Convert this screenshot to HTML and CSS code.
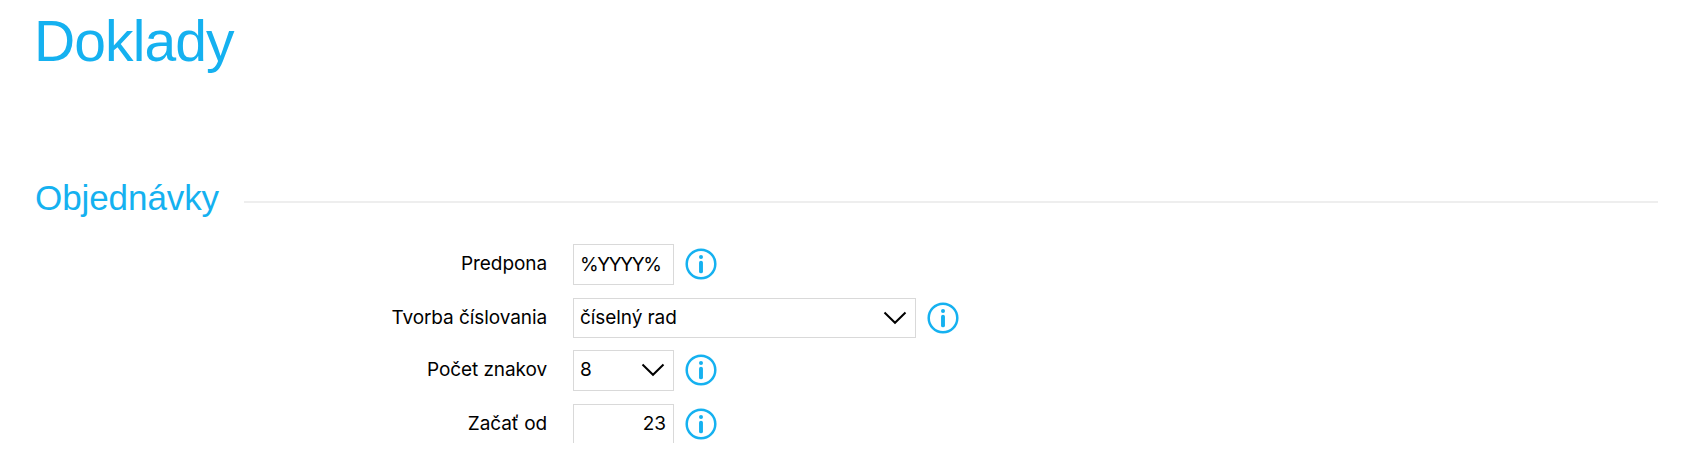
FILE: index.html
```html
<!DOCTYPE html>
<html lang="sk">
<head>
    <meta charset="UTF-8">
    <meta name="viewport" content="width=device-width, initial-scale=1.0">
    <title>Doklady</title>
    <link rel="stylesheet" href="styles.css">
</head>
<body>
    <svg class="defs" width="0" height="0">
        <symbol id="info" viewBox="0 0 32 32">
            <circle cx="16" cy="16" r="14.3" fill="none" stroke="#15b1f0" stroke-width="2.5"/>
            <circle cx="16" cy="9" r="2" fill="#15b1f0"/>
            <path d="M16 14.6v8.8" stroke="#15b1f0" stroke-width="3.9" stroke-linecap="round"/>
        </symbol>
        <symbol id="arrow" viewBox="0 0 24 14">
            <path d="M1.5 1.5L12 11.8L22.5 1.5" fill="none" stroke="#000" stroke-width="2"/>
        </symbol>
    </svg>
    <h1>Doklady</h1>
    <h2><span>Objednávky</span></h2>
    <form>
        <div class="row">
            <label for="prefix">Predpona</label>
            <div class="field short">
                <input id="prefix" class="prefix" type="text" value="%YYYY%">
            </div>
            <svg class="info"><use href="#info"/></svg>
        </div>
        <div class="row low">
            <label for="type">Tvorba číslovania</label>
            <div class="field long">
                <select id="type"><option>číselný rad</option></select>
                <svg class="arrow"><use href="#arrow"/></svg>
            </div>
            <svg class="info"><use href="#info"/></svg>
        </div>
        <div class="row">
            <label for="chars">Počet znakov</label>
            <div class="field short">
                <select id="chars"><option>8</option></select>
                <svg class="arrow"><use href="#arrow"/></svg>
            </div>
            <svg class="info"><use href="#info"/></svg>
        </div>
        <div class="row">
            <label for="start">Začať od</label>
            <div class="field short">
                <input id="start" class="number" type="text" value="23">
            </div>
            <svg class="info"><use href="#info"/></svg>
        </div>
    </form>
</body>
</html>
```
FILE: styles.css
```css
*{
    box-sizing: border-box;
}
body{
    margin: 0;
    padding: 9px 31px 0 35px;
    height: 443px;
    background: #fff;
    color: #000;
    font-family: Inter, sans-serif;
    font-size: 19px;
    letter-spacing: -0.08px;
    overflow: hidden;
}
.defs{
    position: absolute;
}
h1,
h2{
    margin: 0;
    color: #15b1f0;
    font-family: "Liberation Sans", sans-serif;
    font-weight: normal;
}
h1{
    height: 169px;
    margin-left: -1px;
    font-size: 57px;
    line-height: 65px;
    letter-spacing: -0.9px;
}
h2{
    display: flex;
    height: 66px;
    font-size: 35px;
    line-height: 40px;
}
/* line after the section title */
h2::after{
    content: "";
    flex: 1;
    height: 2px;
    margin: 23px 0 0 25px;
    background: #eee;
}
.row{
    display: flex;
    align-items: center;
    height: 41px;
    margin-bottom: 13px;
}
.row.low{
    height: 40px;
    margin-bottom: 12px;
}
label{
    width: 512px;
    margin-right: 26px;
    margin-top: -2px;
    text-align: right;
}
.field{
    position: relative;
    height: 100%;
    border: 1px solid #d9d9d9;
    margin-right: 11px;
}
.short{
    width: 101px;
}
.long{
    width: 343px;
}
.field input,
.field select{
    display: block;
    width: 100%;
    height: 100%;
    margin: 0;
    padding: 0 7px 2px 6px;
    border: 0;
    outline: 0;
    background: none;
    color: #000;
    font: inherit;
    letter-spacing: inherit;
    appearance: none;
}
.field .prefix{
    padding: 0 0 0 6px;
    letter-spacing: -1.4px;
}
.field .number{
    text-align: right;
}
.arrow{
    position: absolute;
    right: 8px;
    top: 12px;
    width: 24px;
    height: 14px;
    pointer-events: none;
}
.info{
    width: 32px;
    height: 32px;
    margin-top: -1px;
}
```
